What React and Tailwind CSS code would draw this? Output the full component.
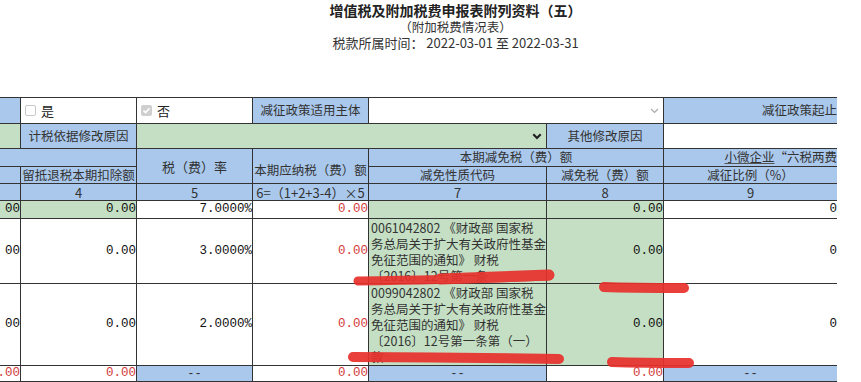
import React from "react";

const CJK = "font-['Noto_Sans_CJK_SC',sans-serif]";
const MONO = "font-['Liberation_Mono',monospace]";
const BLUE = "bg-[#a9c8ec]";
const GREEN = "bg-[#c4dfc3]";
const WHITE = "bg-white";

function H({ className = "", children }) {
  return (
    <div className={`${BLUE} ${CJK} text-[12.5px] text-[#333] leading-none flex items-center justify-center whitespace-nowrap overflow-hidden ${className}`}>
      {children}
    </div>
  );
}

function N({ bg = WHITE, red = false, className = "", children }) {
  return (
    <div className={`${bg} ${MONO} text-[12.5px] leading-none flex items-center justify-end whitespace-nowrap overflow-hidden ${red ? "text-[#d23b3b]" : "text-[#111]"} ${className}`}>
      {children}
    </div>
  );
}

function Dash() {
  return (
    <div className={`${BLUE} ${MONO} text-[12px] text-[#333] leading-none flex items-center justify-center`}>--</div>
  );
}

function Code({ lines }) {
  return (
    <div className={`${GREEN} ${CJK} text-[12.5px] leading-[16px] text-[#333] pl-[2px] pt-[1px] whitespace-nowrap overflow-hidden`}>
      {lines.map((l, i) => (
        <div key={i}>{l}</div>
      ))}
    </div>
  );
}

export default function App() {
  return (
    <div className={`relative w-[861px] h-[382px] overflow-hidden bg-white ${CJK}`}>
      <div className="pl-[50px] pt-[1px] text-center text-[#222]">
        <div className="text-[14px] font-bold leading-[18px]">增值税及附加税费申报表附列资料（五）</div>
        <div className="text-[12.5px] leading-[16px] text-[#333]">（附加税费情况表）</div>
        <div className="text-[13px] leading-[16px] text-[#333]">税款所属时间： 2022-03-01 至 2022-03-31</div>
      </div>

      <div className="mt-[46px] w-[837px] overflow-hidden">
        <div className="grid w-max grid-cols-[20px_115px_115px_115px_177px_116px_173px_122px] grid-rows-[25px_24px_17px_16px_16px_17px_64px_81px_15px] gap-px bg-[#333] py-px">
          {/* row 1 */}
          <div className={BLUE}></div>
          <div className="bg-white flex items-center pl-[4px] gap-[5px]">
            <span className="w-[11px] h-[11px] border border-[#c8c8c8] rounded-[2px] bg-white"></span>
            <span className="text-[13px] text-[#222] leading-none">是</span>
          </div>
          <div className="bg-white flex items-center pl-[4px] gap-[5px]">
            <span className="w-[11px] h-[11px] rounded-[2px] bg-[#cfcfcf] flex items-center justify-center">
              <svg width="9" height="9" viewBox="0 0 9 9">
                <path d="M1.5 4.6 L3.6 6.6 L7.6 2.2" stroke="#fff" strokeWidth="1.6" fill="none" />
              </svg>
            </span>
            <span className="text-[13px] text-[#222] leading-none">否</span>
          </div>
          <H>减征政策适用主体</H>
          <div className="col-span-2 bg-white flex items-center justify-end pr-[4px]">
            <svg width="9" height="6" viewBox="0 0 9 6">
              <path d="M1 1 L4.5 4.5 L8 1" stroke="#aaa" strokeWidth="1.2" fill="none" />
            </svg>
          </div>
          <H className="col-span-2">减征政策起止时间</H>

          {/* row 2 */}
          <div className={GREEN}></div>
          <H>计税依据修改原因</H>
          <div className={`col-span-3 ${GREEN} flex items-center justify-end pr-[4px]`}>
            <svg width="10" height="7" viewBox="0 0 10 7">
              <path d="M1.3 1.3 L5 5 L8.7 1.3" stroke="#222" strokeWidth="2.2" fill="none" />
            </svg>
          </div>
          <H>其他修改原因</H>
          <div className="col-span-2 bg-white"></div>

          {/* row 3a */}
          <div className={`col-span-2 ${BLUE}`}></div>
          <H className="row-span-2 text-[13px]">税（费）率</H>
          <H className="row-span-2 pt-[8px]">本期应纳税（费）额</H>
          <H className="col-span-2">本期减免税（费）额</H>
          <H className="col-span-2">
            <span className="underline decoration-[#555]">小微企业</span>“六税两费”减免政策
          </H>

          {/* row 3b */}
          <div className={BLUE}></div>
          <H>留抵退税本期扣除额</H>
          <H>减免性质代码</H>
          <H>减免税（费）额</H>
          <H>减征比例（%）</H>
          <H>减征额</H>

          {/* row 4 */}
          <div className={BLUE}></div>
          <H className="text-[13px]">4</H>
          <H className="text-[13px]">5</H>
          <H className="text-[13px]">6=（1+2+3-4）×5</H>
          <H className="text-[13px]">7</H>
          <H className="text-[13px]">8</H>
          <H className="text-[13px]">9</H>
          <H className="text-[13px]">10</H>

          {/* data 1 */}
          <N bg={GREEN}>00</N>
          <N bg={GREEN}>0.00</N>
          <N>7.0000%</N>
          <N red>0.00</N>
          <div className={GREEN}></div>
          <N bg={GREEN}>0.00</N>
          <N>0</N>
          <N>0.00</N>

          {/* data 2 */}
          <N>00</N>
          <N>0.00</N>
          <N>3.0000%</N>
          <N red>0.00</N>
          <Code
            lines={[
              "0061042802 《财政部 国家税",
              "务总局关于扩大有关政府性基金",
              "免征范围的通知》 财税",
              "〔2016〕12号第一条",
            ]}
          />
          <N bg={GREEN}>0.00</N>
          <N>0</N>
          <N>0.00</N>

          {/* data 3 */}
          <N>00</N>
          <N>0.00</N>
          <N>2.0000%</N>
          <N red>0.00</N>
          <Code
            lines={[
              "0099042802 《财政部 国家税",
              "务总局关于扩大有关政府性基金",
              "免征范围的通知》 财税",
              "〔2016〕12号第一条第（一）",
              "款",
            ]}
          />
          <N bg={GREEN}>0.00</N>
          <N>0</N>
          <N>0.00</N>

          {/* data 4 */}
          <N red>.00</N>
          <N red>0.00</N>
          <Dash />
          <N red>0.00</N>
          <Dash />
          <N red>0.00</N>
          <Dash />
          <Dash />
        </div>
      </div>

      <svg className="absolute left-0 top-0 pointer-events-none" width="861" height="382" viewBox="0 0 861 382">
        <g stroke="#e8302c" strokeLinecap="round" fill="none" opacity="0.92">
          <path d="M358 281 C 420 280, 500 278, 549 276" strokeWidth="9" />
          <path d="M440 279 C 490 277, 520 276, 549 275" strokeWidth="11" />
          <path d="M604 287 C 630 288, 660 288, 684 288" strokeWidth="10" />
          <path d="M353 357 C 420 357, 500 358, 559 359" strokeWidth="10" />
          <path d="M612 362 C 640 363, 665 363, 689 363" strokeWidth="10" />
        </g>
      </svg>
    </div>
  );
}
